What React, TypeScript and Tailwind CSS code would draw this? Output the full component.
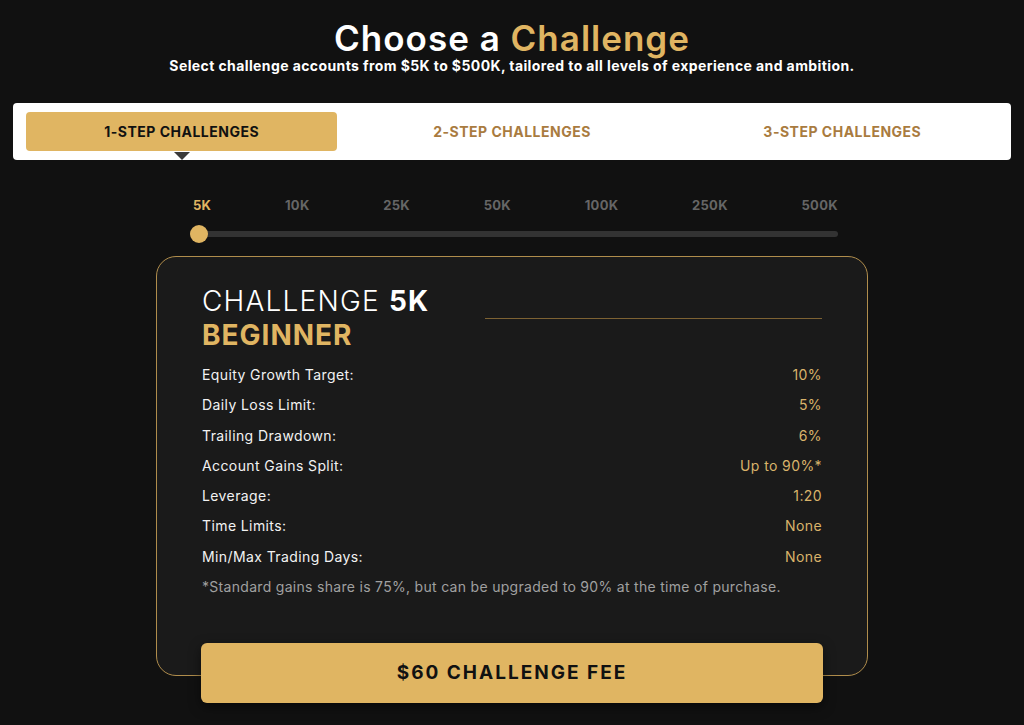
import React, { useState } from 'react';

const tabs = ['1-STEP CHALLENGES', '2-STEP CHALLENGES', '3-STEP CHALLENGES'];
const sizes = ['5K', '10K', '25K', '50K', '100K', '250K', '500K'];

const rules: { label: string; value: string }[] = [
    { label: 'Equity Growth Target:', value: '10%' },
    { label: 'Daily Loss Limit:', value: '5%' },
    { label: 'Trailing Drawdown:', value: '6%' },
    { label: 'Account Gains Split:', value: 'Up to 90%*' },
    { label: 'Leverage:', value: '1:20' },
    { label: 'Time Limits:', value: 'None' },
    { label: 'Min/Max Trading Days:', value: 'None' },
];

const App: React.FC = () => {
    const [tab, setTab] = useState(0);
    const [size, setSize] = useState(0);

    return (
        <div className="min-h-[725px] bg-[#111111] text-white font-['Inter','Noto_Sans',sans-serif] pt-[17px]">
            {/* heading */}
            <div className="text-center">
                <h1 className="text-[35px] leading-[42px] font-semibold tracking-[1px]">
                    Choose a <span className="text-[#e0b562]">Challenge</span>
                </h1>
                <p className="text-[14px] leading-[14px] font-bold tracking-[0.4px]">
                    Select challenge accounts from $5K to $500K, tailored to all levels of experience and ambition.
                </p>
            </div>

            {/* step tabs */}
            <div className="mx-[13px] mt-[30px] bg-white rounded-[4px] px-[13px] pt-[9px] pb-[9px] grid grid-cols-3 gap-[19px]">
                {tabs.map((t, i) => (
                    <button
                        key={t}
                        onClick={() => setTab(i)}
                        className={`relative h-[39px] rounded-[4px] text-[14px] font-bold tracking-[0.5px] ${
                            tab === i ? 'bg-[#e0b562] text-[#111111]' : 'text-[#a97b40]'
                        }`}
                    >
                        {t}
                        {tab === i && (
                            <span className="absolute left-1/2 -translate-x-1/2 top-full mt-px w-0 h-0 border-l-[8px] border-r-[8px] border-t-[8px] border-l-transparent border-r-transparent border-t-[#3a3a3a]" />
                        )}
                    </button>
                ))}
            </div>

            {/* size slider */}
            <div className="w-[648px] mt-[37px] ml-[190px]">
                <div className="flex justify-between pl-[3px]">
                    {sizes.map((s, i) => (
                        <button
                            key={s}
                            onClick={() => setSize(i)}
                            className={`text-[13px] leading-[16px] font-bold tracking-[0.3px] ${size === i ? 'text-[#e0b562]' : 'text-[#666666]'}`}
                        >
                            {s}
                        </button>
                    ))}
                </div>
                <div className="relative mt-[12px] h-[18px] flex items-center">
                    <div className="w-full h-[6px] rounded-full bg-[#333333]" />
                    <div
                        className="absolute top-0 w-[18px] h-[18px] rounded-full bg-[#e0b562]"
                        style={{ left: `${(size / (sizes.length - 1)) * 100}%`, transform: `translateX(-${(size / (sizes.length - 1)) * 100}%)` }}
                    />
                </div>
            </div>

            {/* challenge card */}
            <div className="w-[712px] ml-[156px] mt-[13px]">
                <div className="h-[420px] rounded-[20px] border border-[#b08d4c] bg-[#1a1a1a] px-[45px] pt-[27px]">
                    <div className="flex items-center">
                        <div>
                            <div className="text-[28px] leading-[34px] font-light tracking-[1.2px]">
                                CHALLENGE <span className="font-bold">{sizes[size]}</span>
                            </div>
                            <div className="text-[28px] leading-[34px] font-bold tracking-[1px] text-[#e0b562]">BEGINNER</div>
                        </div>
                        <div className="ml-auto w-[337px] h-px bg-[#7d6233]" />
                    </div>
                    <div className="mt-[8px]">
                        {rules.map(r => (
                            <div key={r.label} className="flex justify-between text-[14px] leading-[30.3px] tracking-[0.4px]">
                                <span className="text-[#f2f2f2]">{r.label}</span>
                                <span className="text-[#d9b36a]">{r.value}</span>
                            </div>
                        ))}
                    </div>
                    <p className="text-[14px] leading-[30px] tracking-[0.3px] text-[#a0a0a0]">
                        *Standard gains share is 75%, but can be upgraded to 90% at the time of purchase.
                    </p>
                </div>
                <button className="relative block mx-[45px] -mt-[33px] w-[622px] h-[60px] rounded-[6px] bg-[#e0b562] text-[#111111] text-[19px] font-bold tracking-[2px] shadow-[0_4px_12px_rgba(0,0,0,0.5)]">
                    $60 CHALLENGE FEE
                </button>
            </div>
        </div>
    );
};

export default App;
